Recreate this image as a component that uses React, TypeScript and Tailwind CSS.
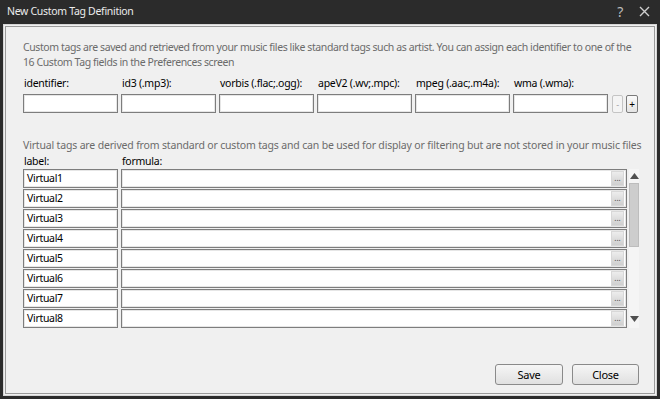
import { useState } from "react";

const TAG_COLUMNS = [
  "identifier:",
  "id3 (.mp3):",
  "vorbis (.flac;.ogg):",
  "apeV2 (.wv;.mpc):",
  "mpeg (.aac;.m4a):",
  "wma (.wma):",
];

const VIRTUALS = [
  "Virtual1",
  "Virtual2",
  "Virtual3",
  "Virtual4",
  "Virtual5",
  "Virtual6",
  "Virtual7",
  "Virtual8",
];

function TextBox({ value = "", className = "" }: { value?: string; className?: string }) {
  return (
    <div
      className={`h-[19px] border border-[#7d7d7d] bg-white shadow-[inset_0_0_0_1px_#e6e6e6] px-[3px] text-[10.5px] tracking-[-0.3px] leading-[17px] text-black ${className}`}
    >
      {value}
    </div>
  );
}

export default function App() {
  const [labels] = useState(VIRTUALS);

  return (
    <div
      className="w-[660px] h-[399px] bg-[#2b2b2b] flex flex-col select-none overflow-hidden"
      style={{ fontFamily: '"Noto Sans", "Open Sans", sans-serif' }}
    >
      <div className="h-[24px] flex items-center pl-[7px] pr-[10px] text-[10.5px] tracking-[-0.3px] text-[#ececec]">
        <span className="flex-1">New Custom Tag Definition</span>
        <span className="text-[14px] text-[#bdbdbd] mr-[16px] leading-none">?</span>
        <svg width="11" height="11" viewBox="0 0 11 11" className="mb-[1px]">
          <path d="M1 1 L10 10 M10 1 L1 10" stroke="#cfcfcf" strokeWidth="1.4" />
        </svg>
      </div>

      <div className="flex-1 min-w-0 mx-[3px] mb-[3px] border border-[#d6d6d6] p-[1px] bg-[#f0f0f0] flex">
        <div className="flex-1 min-w-0 border border-[#9a9a9a] bg-[#f0f0f0] flex flex-col pl-[17px] pr-[15px] pt-[13px] pb-[8px] text-[10.5px] tracking-[-0.25px]">
          <p className="leading-[15px] text-[#6b6b6b] whitespace-nowrap tracking-[-0.4px]">
            Custom tags are saved and retrieved from your music files like standard tags such as artist. You can assign each identifier to one of the
            <br />
            16 Custom Tag fields in the Preferences screen
          </p>

          <div className="mt-[6px] flex gap-[3px]">
            {TAG_COLUMNS.map((col) => (
              <div key={col} className="w-[95px] flex flex-col">
                <span className="ml-[1px] leading-[15px] text-black whitespace-nowrap">{col}</span>
                <TextBox className="mt-[3px]" />
              </div>
            ))}
            <div className="flex items-end gap-[3px] ml-[1px]">
              <button
                type="button"
                className="w-[11px] h-[18px] border border-[#c4c4c4] rounded-[2px] bg-[#f4f4f4] text-[9px] leading-none text-[#a0a0a0] flex items-center justify-center"
              >
                -
              </button>
              <button
                type="button"
                className="w-[12px] h-[18px] border border-[#7a7a7a] rounded-[2px] bg-gradient-to-b from-[#fafafa] to-[#e4e4e4] text-[10px] leading-none text-black flex items-center justify-center"
              >
                +
              </button>
            </div>
          </div>

          <p className="mt-[25px] leading-[14px] text-[#6b6b6b] whitespace-nowrap tracking-[-0.17px]">
            Virtual tags are derived from standard or custom tags and can be used for display or filtering but are not stored in your music files
          </p>

          <div className="mt-[2px] flex gap-[3px] leading-[15px] text-black">
            <span className="w-[95px] pl-[1px]">label:</span>
            <span className="pl-[1px]">formula:</span>
          </div>

          <div className="flex gap-[2px]">
            <div className="flex flex-col gap-[1px]">
              {labels.map((label) => (
                <div key={label} className="flex gap-[3px]">
                  <TextBox value={label} className="w-[95px]" />
                  <div className="w-[506px] h-[19px] border border-[#7d7d7d] bg-white shadow-[inset_0_0_0_1px_#e6e6e6] flex items-center justify-end pr-[2px]">
                    <button
                      type="button"
                      className="w-[13px] h-[15px] bg-gradient-to-b from-[#ededed] to-[#cfcfcf] border border-[#d8d8d8] text-[8px] leading-none text-[#444] flex items-end justify-center pb-[3px] tracking-[0px]"
                    >
                      ...
                    </button>
                  </div>
                </div>
              ))}
            </div>
            <div className="w-[13px] h-[159px] bg-[#f5f5f5] flex flex-col items-center">
              <svg width="9" height="6" viewBox="0 0 9 6" className="mt-[4px]">
                <path d="M4.5 0 L9 6 L0 6 Z" fill="#505050" />
              </svg>
              <div className="mt-[4px] w-[10px] h-[64px] bg-[#cdcdcd] border border-[#bdbdbd]" />
              <div className="flex-1" />
              <svg width="9" height="6" viewBox="0 0 9 6" className="mb-[6px]">
                <path d="M0 0 L9 0 L4.5 6 Z" fill="#505050" />
              </svg>
            </div>
          </div>

          <div className="flex-1" />

          <div className="flex justify-end gap-[9px]">
            <button
              type="button"
              className="w-[68px] h-[21px] rounded-[3px] border border-[#8a8a8a] bg-gradient-to-b from-[#f6f6f6] to-[#e0e0e0] text-[11px] leading-none text-black"
            >
              Save
            </button>
            <button
              type="button"
              className="w-[67px] h-[21px] rounded-[3px] border border-[#8a8a8a] bg-gradient-to-b from-[#f6f6f6] to-[#e0e0e0] text-[11px] leading-none text-black"
            >
              Close
            </button>
          </div>
        </div>
      </div>
    </div>
  );
}
